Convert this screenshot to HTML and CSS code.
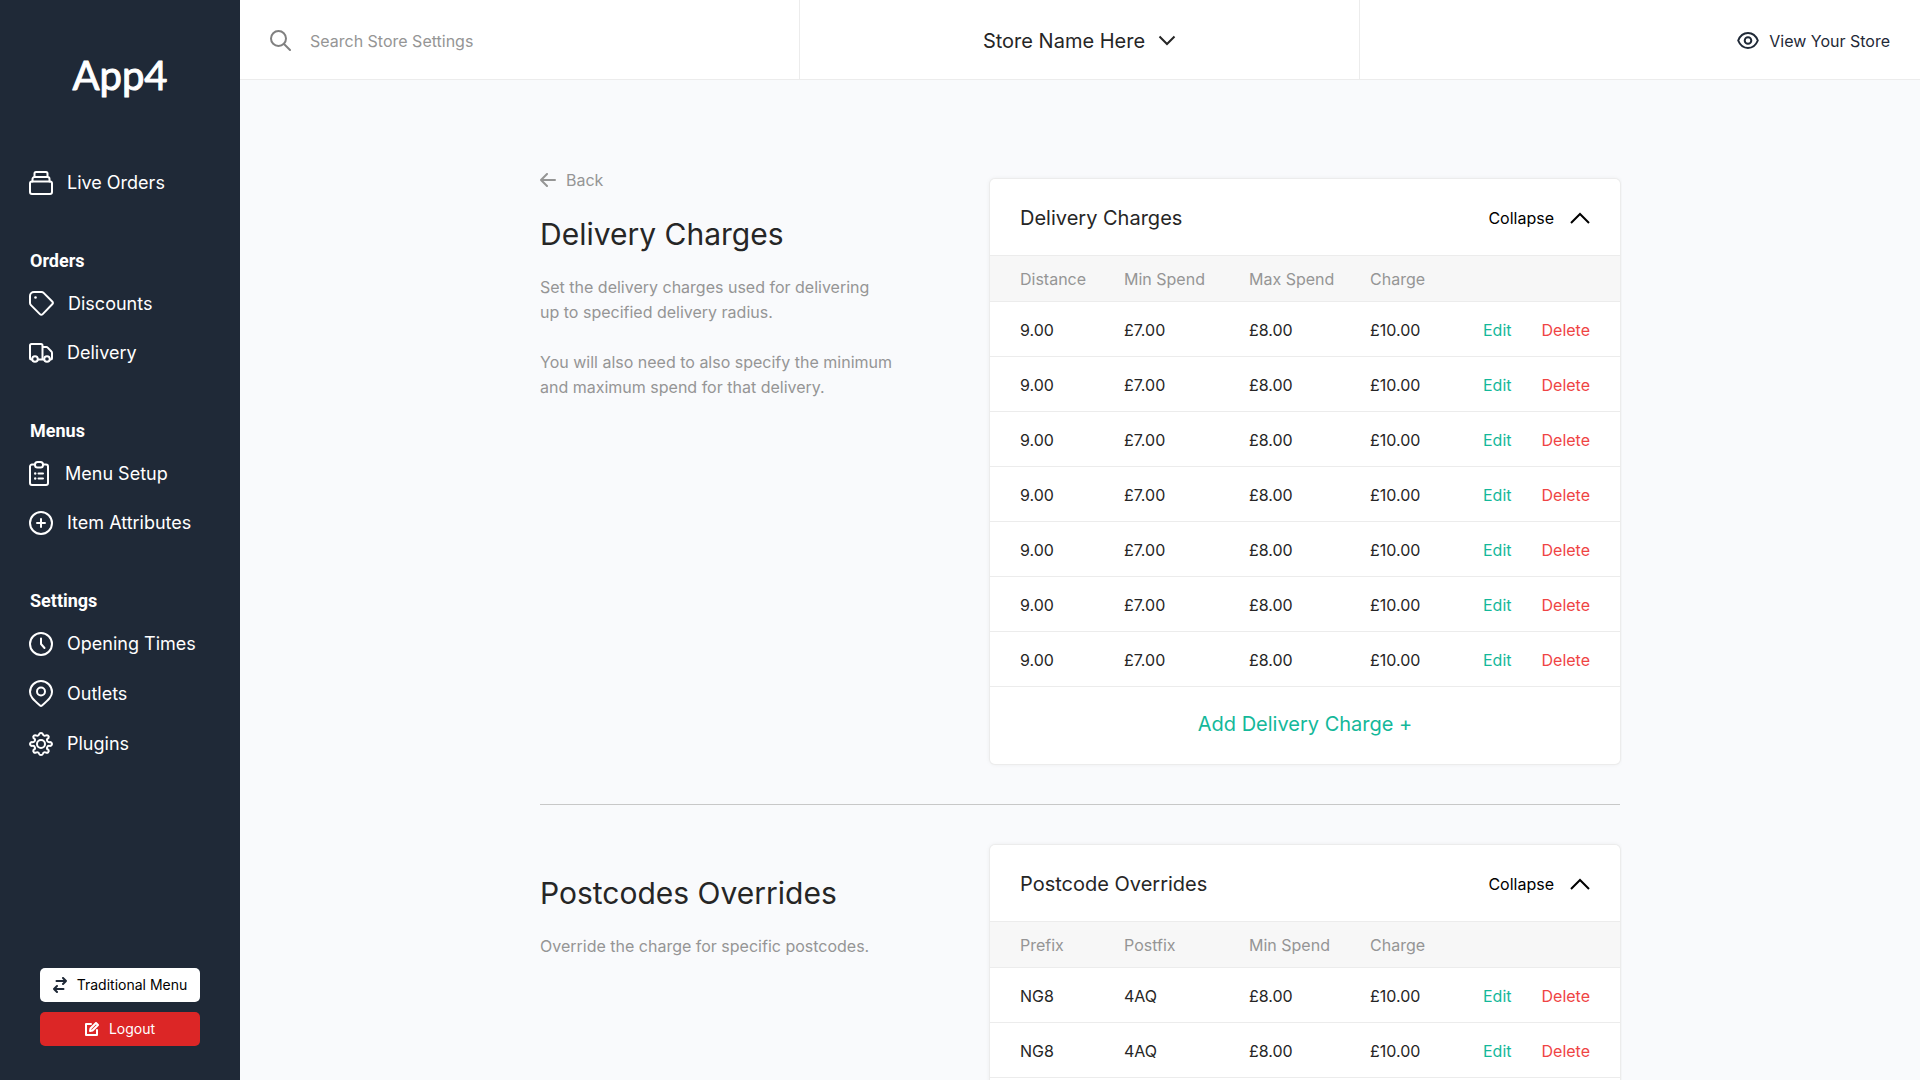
FILE: index.html
```html
<!DOCTYPE html>
<html lang="en">
<head>
<meta charset="utf-8">
<title>Delivery Charges - App4</title>
<meta name="viewport" content="width=device-width, initial-scale=1">
<link rel="stylesheet" href="styles.css">
</head>
<body>
<div class="app">
  <aside class="sidebar">
    <a class="logo" href="#" aria-label="App4">
      <svg width="110" height="66" viewBox="0 0 110 66"><text class="logo-text" x="55" y="46" text-anchor="middle">App4</text></svg>
    </a>
    <nav class="nav">
      <ul class="nav-list">
        <li><a class="nav-link" href="#"><svg class="icon" width="24" height="24" viewBox="0 0 24 24"><rect x="1" y="10.5" width="22" height="12.5" rx="2"/><path d="M3.500 10.500V8a2 2 0 0 1 2-2h13a2 2 0 0 1 2 2v2.500M5.500 6V2.500a1.500 1.500 0 0 1 1.500-1.500h10a1.500 1.500 0 0 1 1.500 1.500V6"/></svg>Live Orders</a></li>
      </ul>
      <h2 class="nav-title">Orders</h2>
      <ul class="nav-list">
        <li><a class="nav-link" href="#"><svg class="icon" width="25" height="25" viewBox="0 0 25 25"><path d="M1 5a4 4 0 0 1 4-4h7.500a3 3 0 0 1 2.100.9l8.600 8.600a2 2 0 0 1 0 2.800l-9.500 9.800a2 2 0 0 1-2.800 0l-9-9a3 3 0 0 1-.9-2.100z"/><circle class="dot" cx="6.500" cy="6.500" r="1.300"/></svg>Discounts</a></li>
        <li><a class="nav-link" href="#"><svg class="icon" width="24" height="20" viewBox="0 0 24 20"><path d="M3 16.500H2.500A1.500 1.500 0 0 1 1 15V2.500A1.500 1.500 0 0 1 2.500 1H12a1.500 1.500 0 0 1 1.500 1.500v14M9 16.500h6M13.500 4h3.800a2 2 0 0 1 1.400.6l3.700 3.900a2 2 0 0 1 .6 1.400V15a1.500 1.500 0 0 1-1.500 1.500H21"/><circle cx="6" cy="16" r="2.800"/><circle cx="18" cy="16" r="2.800"/></svg>Delivery</a></li>
      </ul>
      <h2 class="nav-title">Menus</h2>
      <ul class="nav-list">
        <li><a class="nav-link" href="#"><svg class="icon" width="22" height="25" viewBox="0 0 22 25"><path d="M6 3.500H3a2 2 0 0 0-2 2V22a2 2 0 0 0 2 2h14a2 2 0 0 0 2-2V5.500a2 2 0 0 0-2-2h-3M9.500 12.500H14M9.500 17.500H14"/><rect x="6" y="1" width="8" height="5.500" rx="2.500"/><circle class="dot" cx="6.200" cy="12.500" r="1.200"/><circle class="dot" cx="6.200" cy="17.500" r="1.200"/></svg>Menu Setup</a></li>
        <li><a class="nav-link" href="#"><svg class="icon" width="24" height="24" viewBox="0 0 24 24"><circle cx="12" cy="12" r="11"/><path d="M12 8v8M8 12h8"/></svg>Item Attributes</a></li>
      </ul>
      <h2 class="nav-title">Settings</h2>
      <ul class="nav-list">
        <li><a class="nav-link" href="#"><svg class="icon" width="24" height="24" viewBox="0 0 24 24"><circle cx="12" cy="12" r="11"/><path d="M12 6.500V12l3.500 4"/></svg>Opening Times</a></li>
        <li><a class="nav-link" href="#"><svg class="icon" width="24" height="27" viewBox="0 0 24 27"><path d="M12 1a11 11 0 0 1 11 11c0 4.500-3 7.500-10 13.500a1.500 1.500 0 0 1-2 0C4 19.500 1 16.500 1 12A11 11 0 0 1 12 1z"/><circle cx="12" cy="11.500" r="4"/></svg>Outlets</a></li>
        <li><a class="nav-link" href="#"><svg class="icon" width="24" height="24" viewBox="0 0 24 24"><circle cx="12" cy="12" r="4"/><path d="M10.100 2.300c.5-1.700 3.300-1.700 3.800 0a2 2 0 0 0 3 1.200c1.700-.9 3.500.9 2.600 2.600a2 2 0 0 0 1.300 4c2.900-.1 2.900 3.900 0 3.800a2 2 0 0 0-1.300 4c.9 1.700-.9 3.500-2.600 2.600a2 2 0 0 0-3 1.200c-.5 1.700-3.300 1.700-3.800 0a2 2 0 0 0-3-1.200c-1.700.9-3.500-.9-2.600-2.600a2 2 0 0 0-1.300-4c-2.900.1-2.900-3.900 0-3.800a2 2 0 0 0 1.300-4c-.9-1.700.9-3.500 2.600-2.600a2 2 0 0 0 3-1.200z"/></svg>Plugins</a></li>
      </ul>
    </nav>
    <div class="sidebar-actions">
      <button class="btn btn-light" type="button"><svg class="icon" width="14" height="16" viewBox="0 0 14 16"><path d="M3.500 4H13M10 1l3 3-3 3M10.500 12H1M4 9l-3 3 3 3"/></svg>Traditional Menu</button>
      <button class="btn btn-danger" type="button"><svg class="icon" width="14" height="14" viewBox="0 0 14 14"><path d="M6 2H1v11h11V8M5 9l.5-2.500L11 1l2 2-5.500 5.500z"/></svg>Logout</button>
    </div>
  </aside>

  <div class="page">
    <header class="topbar">
      <label class="search">
        <svg class="icon" width="21" height="21" viewBox="0 0 21 21"><circle cx="8.500" cy="8.500" r="7.500"/><path d="M14 14l6 6"/></svg>
        <input class="search-input" type="search" placeholder="Search Store Settings" aria-label="Search Store Settings">
      </label>
      <div class="store">
        <button class="store-button" type="button">Store Name Here<svg class="icon icon-sharp" width="18" height="11" viewBox="0 0 18 11"><path d="M1.500 1.500L9 9l7.500-7.500"/></svg></button>
      </div>
      <div class="view">
        <a class="view-link" href="#"><svg class="icon" width="22" height="17" viewBox="0 0 22 17"><path d="M1.200 8.500C3 4 6.700 1 11 1s8 3 9.800 7.500C19 13 15.300 16 11 16S3 13 1.200 8.500z"/><circle cx="11" cy="8.500" r="3.300"/></svg>View Your Store</a>
      </div>
    </header>

    <main class="content">
      <section class="section section-first">
        <div class="intro">
          <a class="back" href="#"><svg class="icon" width="16" height="14" viewBox="0 0 16 14"><path d="M15 7H1M7 1L1 7l6 6"/></svg>Back</a>
          <h1 class="heading">Delivery Charges</h1>
          <p class="text">Set the delivery charges used for delivering<br>up to specified delivery radius.</p>
          <p class="text">You will also need to also specify the minimum<br>and maximum spend for that delivery.</p>
        </div>
        <div class="card">
          <div class="card-head">
            <h2 class="card-title">Delivery Charges</h2>
            <button class="collapse" type="button">Collapse<svg class="icon icon-sharp" width="20" height="12" viewBox="0 0 20 12"><path d="M1 11l9-9 9 9"/></svg></button>
          </div>
          <table class="table">
            <colgroup><col class="col-a"><col class="col-b"><col class="col-c"><col class="col-d"><col></colgroup>
            <thead><tr><th>Distance</th><th>Min Spend</th><th>Max Spend</th><th>Charge</th><td></td></tr></thead>
            <tbody>
              <tr><td>9.00</td><td>£7.00</td><td>£8.00</td><td>£10.00</td><td class="actions"><a class="edit" href="#">Edit</a><a class="delete" href="#">Delete</a></td></tr>
              <tr><td>9.00</td><td>£7.00</td><td>£8.00</td><td>£10.00</td><td class="actions"><a class="edit" href="#">Edit</a><a class="delete" href="#">Delete</a></td></tr>
              <tr><td>9.00</td><td>£7.00</td><td>£8.00</td><td>£10.00</td><td class="actions"><a class="edit" href="#">Edit</a><a class="delete" href="#">Delete</a></td></tr>
              <tr><td>9.00</td><td>£7.00</td><td>£8.00</td><td>£10.00</td><td class="actions"><a class="edit" href="#">Edit</a><a class="delete" href="#">Delete</a></td></tr>
              <tr><td>9.00</td><td>£7.00</td><td>£8.00</td><td>£10.00</td><td class="actions"><a class="edit" href="#">Edit</a><a class="delete" href="#">Delete</a></td></tr>
              <tr><td>9.00</td><td>£7.00</td><td>£8.00</td><td>£10.00</td><td class="actions"><a class="edit" href="#">Edit</a><a class="delete" href="#">Delete</a></td></tr>
              <tr><td>9.00</td><td>£7.00</td><td>£8.00</td><td>£10.00</td><td class="actions"><a class="edit" href="#">Edit</a><a class="delete" href="#">Delete</a></td></tr>
            </tbody>
          </table>
          <button class="add" type="button">Add Delivery Charge +</button>
        </div>
      </section>

      <hr class="divider">

      <section class="section">
        <div class="intro intro-plain">
          <h1 class="heading">Postcodes Overrides</h1>
          <p class="text">Override the charge for specific postcodes.</p>
        </div>
        <div class="card card-padded">
          <div class="card-head">
            <h2 class="card-title">Postcode Overrides</h2>
            <button class="collapse" type="button">Collapse<svg class="icon icon-sharp" width="20" height="12" viewBox="0 0 20 12"><path d="M1 11l9-9 9 9"/></svg></button>
          </div>
          <table class="table">
            <colgroup><col class="col-a"><col class="col-b"><col class="col-c"><col class="col-d"><col></colgroup>
            <thead><tr><th>Prefix</th><th>Postfix</th><th>Min Spend</th><th>Charge</th><td></td></tr></thead>
            <tbody>
              <tr><td>NG8</td><td>4AQ</td><td>£8.00</td><td>£10.00</td><td class="actions"><a class="edit" href="#">Edit</a><a class="delete" href="#">Delete</a></td></tr>
              <tr><td>NG8</td><td>4AQ</td><td>£8.00</td><td>£10.00</td><td class="actions"><a class="edit" href="#">Edit</a><a class="delete" href="#">Delete</a></td></tr>
            </tbody>
          </table>
        </div>
      </section>
    </main>
  </div>
</div>
</body>
</html>
```

FILE: styles.css
```css
* {
  box-sizing: border-box;
}

body {
  margin: 0;
  background: #f9fafc;
  color: #262626;
  font: 400 16px/24px Inter, "Liberation Sans", sans-serif;
}

a {
  color: inherit;
  text-decoration: none;
}

button {
  padding: 0;
  border: 0;
  background: none;
  color: inherit;
  font: inherit;
  cursor: pointer;
}

h1, h2, p, ul {
  margin: 0;
  padding: 0;
  font-weight: inherit;
}

ul {
  list-style: none;
}

.icon {
  flex: none;
  fill: none;
  stroke: currentColor;
  stroke-width: 2;
  stroke-linecap: round;
  stroke-linejoin: round;
}

.icon-sharp {
  stroke-linecap: butt;
  stroke-linejoin: miter;
}

.dot {
  fill: currentColor;
  stroke: none;
}

.app {
  display: flex;
  height: 100vh;
  overflow: hidden;
}

/* Sidebar */
.sidebar {
  display: flex;
  flex: none;
  flex-direction: column;
  width: 240px;
  padding: 44px 0 34px;
  background: #1f2937;
  color: #fff;
}

.logo {
  display: flex;
  justify-content: center;
  margin-bottom: 48px;
}

.logo-text {
  fill: #fff;
  stroke: #fff;
  stroke-width: 1;
  stroke-linejoin: round;
  font: 400 40px Lato, sans-serif;
}

.nav {
  flex: 1;
  padding-left: 29px;
}

.nav-link {
  display: flex;
  align-items: center;
  gap: 14px;
  min-height: 49px;
  padding: 12px 0;
  font-size: 18px;
}

.nav-title {
  margin: 42px 0 6px;
  padding-left: 1px;
  font: 700 18px/24px Roboto, sans-serif;
}

.sidebar-actions {
  display: grid;
  gap: 10px;
  padding: 0 40px;
}

.btn {
  display: flex;
  align-items: center;
  justify-content: center;
  gap: 10px;
  height: 34px;
  border-radius: 5px;
  font-size: 14px;
}

.btn-light {
  background: #fff;
  color: #000;
}

.btn-light .icon {
  color: #1f2937;
}

.btn-danger {
  background: #dc2626;
  color: #fff;
}

/* Top bar */
.page {
  display: flex;
  flex: 1;
  flex-direction: column;
  min-width: 0;
}

.topbar {
  display: grid;
  flex: none;
  grid-template-columns: repeat(3, 1fr);
  height: 80px;
  border-bottom: 1px solid #ececec;
  background: #fff;
}

.search,
.store,
.view {
  display: flex;
  align-items: center;
  padding: 2px 30px 0;
}

.search,
.store {
  border-right: 1px solid #ececec;
}

.search {
  gap: 19px;
  color: #808080;
}

.search-input {
  flex: 1;
  min-width: 0;
  padding: 0;
  border: 0;
  outline: 0;
  background: none;
  color: inherit;
  font: inherit;
}

.search-input::placeholder {
  color: #959595;
}

.store {
  justify-content: center;
}

.store-button {
  display: flex;
  align-items: center;
  gap: 13px;
  font-size: 20px;
}

.view {
  justify-content: flex-end;
  color: #1f2937;
}

.view-link {
  display: flex;
  align-items: center;
  gap: 10px;
}

/* Content */
.content {
  flex: 1;
  overflow: hidden;
  width: 100%;
  max-width: 1084px;
  margin: 0 auto;
  padding: 88px 2px 0;
}

.section {
  display: grid;
  grid-template-columns: 5fr 7fr;
}

.section-first .card {
  margin-top: 11px;
}

.intro-plain {
  padding-top: 28px;
}

.back {
  display: flex;
  align-items: center;
  gap: 10px;
  width: max-content;
  margin-bottom: 22px;
  color: #959595;
}

.heading {
  margin-bottom: 21px;
  font-size: 30px;
  line-height: 40px;
}

.text {
  margin-bottom: 25px;
  color: #959595;
  line-height: 25px;
}

.card {
  border-radius: 5px;
  background: #fff;
  box-shadow: 0 0 0 1px #ececec, 0 0 5px rgba(0, 0, 0, 0.08);
}

.card-padded {
  padding-bottom: 30px;
}

.card-head {
  display: flex;
  align-items: center;
  justify-content: space-between;
  height: 76px;
  padding: 2px 30px 0;
}

.card-title {
  font-size: 20px;
}

.collapse {
  display: flex;
  align-items: center;
  gap: 16px;
  color: #000;
}

.table {
  width: 100%;
  border-collapse: separate;
  border-spacing: 0;
  table-layout: fixed;
}

.col-a { width: 134px; }
.col-b { width: 125px; }
.col-c { width: 121px; }
.col-d { width: 113px; }

.table th,
.table td {
  height: 55px;
  padding: 1px 0 0;
  border-bottom: 1px solid #ececec;
  text-align: left;
}

.table th:first-child,
.table td:first-child {
  padding-left: 30px;
}

.table thead th,
.table thead td {
  height: 47px;
  border-top: 1px solid #ececec;
  background: #f7f7f7;
  color: #959595;
  font-weight: 400;
}

.actions a {
  margin-right: 30px;
}

.actions a:last-child {
  margin-right: 0;
}

.edit {
  color: #14b89a;
}

.delete {
  color: #ef4444;
}

.add {
  display: block;
  width: 100%;
  height: 77px;
  padding-bottom: 3px;
  color: #14b89a;
  font-size: 20px;
}

.divider {
  margin: 40px 0;
  border: 0;
  border-top: 1px solid #c8c8c8;
}
```
